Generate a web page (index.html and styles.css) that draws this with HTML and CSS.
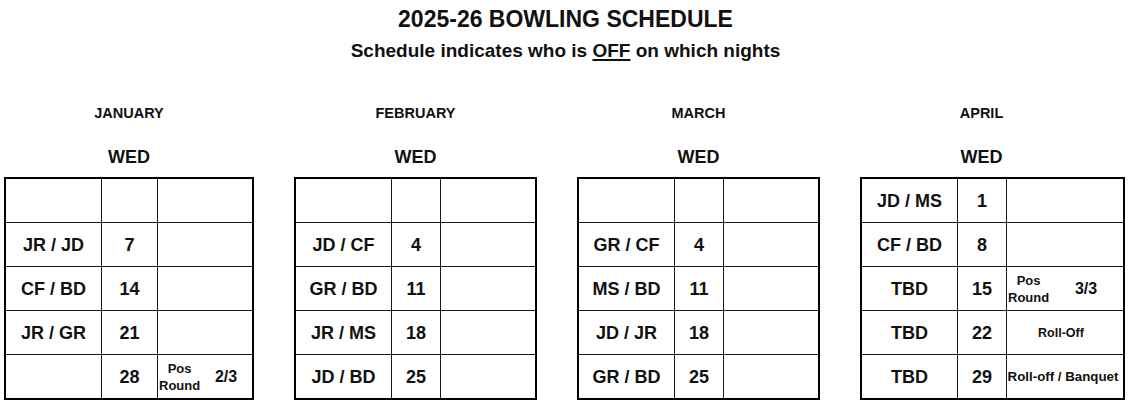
FILE: index.html
```html
<!DOCTYPE html>
<html lang="en">
<head>
<meta charset="utf-8">
<title>2025-26 Bowling Schedule</title>
<link rel="stylesheet" href="styles.css">
</head>
<body>
<header class="head">
  <h1 class="title">2025-26 BOWLING SCHEDULE</h1>
  <p class="sub">Schedule indicates who is <u>OFF</u> on which nights</p>
</header>
<main class="months">
  <section class="month">
    <div class="month-head">
      <div class="month-name">JANUARY</div>
      <div class="day">WED</div>
    </div>
    <div class="sched sched-jan">
      <div class="cell"></div><div class="cell"></div><div class="cell"></div>
      <div class="cell">JR / JD</div><div class="cell">7</div><div class="cell"></div>
      <div class="cell">CF / BD</div><div class="cell">14</div><div class="cell"></div>
      <div class="cell">JR / GR</div><div class="cell">21</div><div class="cell"></div>
      <div class="cell"></div><div class="cell">28</div>
      <div class="cell pos"><span class="pos-label">Pos<br>Round</span><span class="pos-num">2/3</span></div>
    </div>
  </section>
  <section class="month">
    <div class="month-head">
      <div class="month-name">FEBRUARY</div>
      <div class="day">WED</div>
    </div>
    <div class="sched">
      <div class="cell"></div><div class="cell"></div><div class="cell"></div>
      <div class="cell">JD / CF</div><div class="cell">4</div><div class="cell"></div>
      <div class="cell">GR / BD</div><div class="cell">11</div><div class="cell"></div>
      <div class="cell">JR / MS</div><div class="cell">18</div><div class="cell"></div>
      <div class="cell">JD / BD</div><div class="cell">25</div><div class="cell"></div>
    </div>
  </section>
  <section class="month">
    <div class="month-head">
      <div class="month-name">MARCH</div>
      <div class="day">WED</div>
    </div>
    <div class="sched">
      <div class="cell"></div><div class="cell"></div><div class="cell"></div>
      <div class="cell">GR / CF</div><div class="cell">4</div><div class="cell"></div>
      <div class="cell">MS / BD</div><div class="cell">11</div><div class="cell"></div>
      <div class="cell">JD / JR</div><div class="cell">18</div><div class="cell"></div>
      <div class="cell">GR / BD</div><div class="cell">25</div><div class="cell"></div>
    </div>
  </section>
  <section class="month">
    <div class="month-head month-head-narrow">
      <div class="month-name">APRIL</div>
      <div class="day">WED</div>
    </div>
    <div class="sched sched-apr">
      <div class="cell">JD / MS</div><div class="cell">1</div><div class="cell"></div>
      <div class="cell">CF / BD</div><div class="cell">8</div><div class="cell"></div>
      <div class="cell">TBD</div><div class="cell">15</div>
      <div class="cell pos"><span class="pos-label">Pos<br>Round</span><span class="pos-num">3/3</span></div>
      <div class="cell">TBD</div><div class="cell">22</div><div class="cell note">Roll-Off</div>
      <div class="cell">TBD</div><div class="cell">29</div><div class="cell note note-wide">Roll-off / Banquet</div>
    </div>
  </section>
</main>
</body>
</html>
```

FILE: styles.css
```css
html, body {
  margin: 0;
  padding: 0;
  background: #ffffff;
}

body {
  font-family: "Liberation Sans", Arial, sans-serif;
  font-weight: bold;
  color: #111111;
  padding-top: 6px;
}

.head {
  text-align: center;
}

.title {
  margin: 0;
  font-size: 23px;
  line-height: 26px;
  font-weight: bold;
}

.sub {
  margin: 8px 0 0;
  font-size: 19px;
  line-height: 22px;
}

.sub u {
  text-decoration-thickness: 2px;
  text-underline-offset: 2px;
}

.months {
  display: flex;
  align-items: flex-start;
  gap: 40px;
  padding-left: 4px;
  margin-top: 42px;
}

.month {
  display: flex;
  flex-direction: column;
}

.month-head {
  text-align: center;
}

.month-head-narrow {
  width: 243px;
}

.month-name {
  font-size: 14.5px;
  line-height: 18px;
}

.day {
  margin-top: 24px;
  font-size: 18px;
  line-height: 22px;
}

.sched {
  margin-top: 9px;
  display: grid;
  grid-template-columns: 96px 49px 94px;
  grid-template-rows: repeat(4, 44px) 43px;
  border: 2px solid #000000;
  width: max-content;
}

.sched-jan {
  grid-template-columns: 96px 56px 94px;
}

.sched-apr {
  grid-template-columns: 96px 49px 116px;
}

.cell {
  box-sizing: border-box;
  border-right: 1px solid #1a1a1a;
  border-bottom: 1px solid #1a1a1a;
  display: flex;
  align-items: center;
  justify-content: center;
  font-size: 18px;
  line-height: 22px;
  white-space: nowrap;
}

.cell:nth-child(3n) {
  border-right: none;
}

.cell:nth-last-child(-n+3) {
  border-bottom: none;
}

.pos {
  justify-content: flex-start;
  padding-left: 1px;
}

.pos-label {
  font-size: 13px;
  line-height: 17px;
  text-align: center;
}

.pos-num {
  flex: 1;
  text-align: center;
  font-size: 16px;
  line-height: 20px;
}

.note {
  font-size: 12.5px;
  line-height: 16px;
  padding-right: 8px;
}

.note-wide {
  font-size: 13.3px;
  padding-right: 4px;
}
```
